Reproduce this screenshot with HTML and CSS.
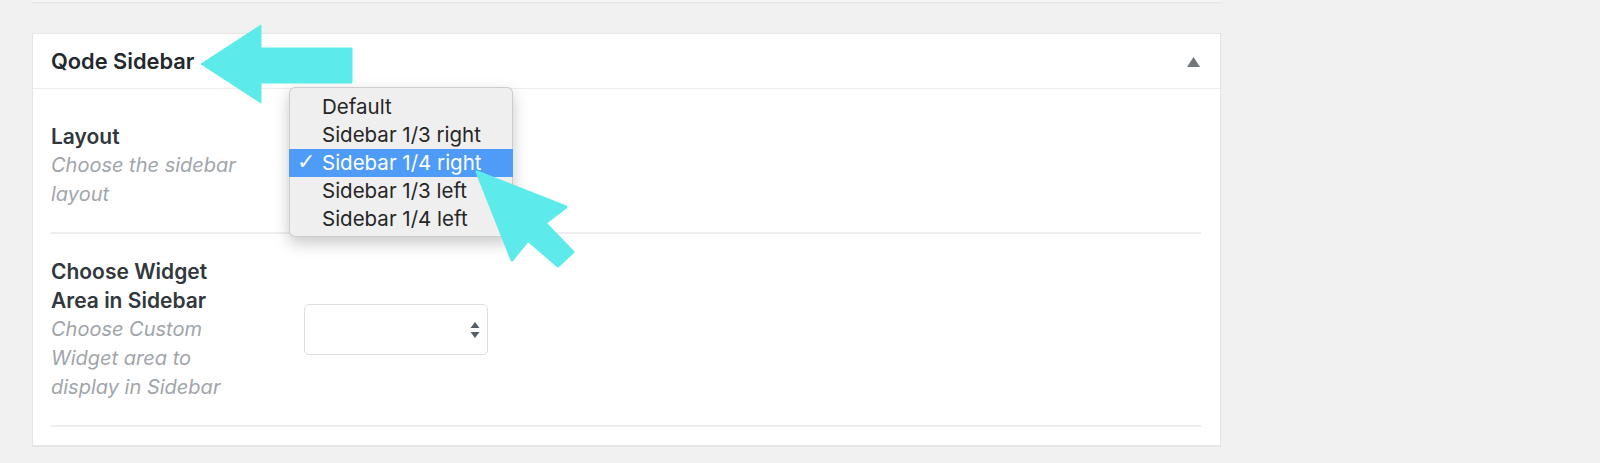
FILE: index.html
```html
<!DOCTYPE html>
<html lang="en">
<head>
<meta charset="utf-8">
<title>Qode Sidebar</title>
<link rel="stylesheet" href="styles.css">
</head>
<body>
<div class="wrap">
  <div class="prev-box"></div>
  <div class="postbox">
    <div class="postbox-header">
      <h2 class="postbox-title">Qode Sidebar</h2>
      <svg class="toggle" width="13" height="10" viewBox="0 0 13 10"><polygon points="6.5,0 13,10 0,10" fill="#72777c"/></svg>
    </div>
    <div class="postbox-inside">
      <div class="field-row">
        <div class="field-label">
          <div class="label-title">Layout</div>
          <div class="label-desc">Choose the sidebar layout</div>
        </div>
        <div class="field-control">
          <div class="select">
            <svg class="select-arrows" width="10" height="16" viewBox="0 0 10 16"><polygon points="5,0 9.5,6 0.5,6" fill="#555d66"/><polygon points="0.5,10 9.5,10 5,16" fill="#555d66"/></svg>
          </div>
          <ul class="popup-menu">
            <li class="menu-item">Default</li>
            <li class="menu-item">Sidebar 1/3 right</li>
            <li class="menu-item is-selected"><span class="check">✓</span>Sidebar 1/4 right</li>
            <li class="menu-item">Sidebar 1/3 left</li>
            <li class="menu-item">Sidebar 1/4 left</li>
          </ul>
        </div>
      </div>
      <div class="field-row">
        <div class="field-label">
          <div class="label-title">Choose Widget Area in Sidebar</div>
          <div class="label-desc">Choose Custom Widget area to display in Sidebar</div>
        </div>
        <div class="field-control">
          <div class="select">
            <svg class="select-arrows" width="10" height="16" viewBox="0 0 10 16"><polygon points="5,0 9.5,6 0.5,6" fill="#555d66"/><polygon points="0.5,10 9.5,10 5,16" fill="#555d66"/></svg>
          </div>
        </div>
      </div>
    </div>
  </div>
</div>
<svg class="annotations" width="1600" height="463" viewBox="0 0 1600 463">
  <polygon points="201,64 261,25 261,48 352,48 352,83 261,83 261,103" fill="#5deaea" stroke="#5deaea" stroke-width="1" stroke-linejoin="round"/>
  <polygon points="477,172 566,207 545,223 573,252 558,266 528,240 512,260" fill="#5deaea" stroke="#5deaea" stroke-width="3" stroke-linejoin="round"/>
</svg>
</body>
</html>
```
FILE: styles.css
```css
html, body {
  margin: 0;
  padding: 0;
}
body {
  background: #f1f1f1;
  font-family: Inter, "Liberation Sans", sans-serif;
  color: #23282d;
  width: 1600px;
  height: 463px;
  overflow: hidden;
  position: relative;
}
.wrap {
  padding-left: 32px;
  width: 1189px;
}
.prev-box {
  height: 2px;
  background: #f5f5f5;
  box-shadow: 0 1px 2px rgba(0, 0, 0, 0.07);
}
.postbox {
  margin-top: 31px;
  background: #fff;
  border: 1px solid #e5e5e5;
  box-shadow: 0 1px 1px rgba(0, 0, 0, 0.04);
}
.postbox-header {
  height: 54px;
  border-bottom: 1px solid #eeeeee;
  display: flex;
  align-items: center;
  justify-content: space-between;
  padding: 0 20px 0 18px;
}
.postbox-title {
  margin: 0;
  font-size: 21.8px;
  font-weight: 600;
  line-height: 54px;
  color: #23282d;
}
.toggle {
  display: block;
  margin-top: 2px;
}
.postbox-inside {
  padding: 10px 19px 18px 18px;
}
.field-row {
  display: flex;
  align-items: center;
  padding: 23px 0;
  border-bottom: 2px solid #eeeeee;
}
.field-label {
  flex: 0 0 192px;
  margin-right: 61px;
}
.label-title {
  font-size: 21px;
  font-weight: 600;
  line-height: 29px;
  color: #32373c;
}
.label-desc {
  font-size: 20px;
  font-style: italic;
  line-height: 29px;
  color: #a0a5aa;
}
.field-control {
  position: relative;
}
.select {
  height: 49px;
  border: 1px solid #dddddd;
  border-radius: 5px;
  background: #fff;
  display: flex;
  align-items: center;
  justify-content: flex-end;
  padding-right: 7px;
  box-sizing: content-box;
  width: 175px;
}
.select-arrows {
  display: block;
}
.popup-menu {
  position: absolute;
  left: -15px;
  top: -53px;
  width: 224px;
  margin: 0;
  padding: 5px 0;
  list-style: none;
  background: #efefef;
  border: 1px solid rgba(0, 0, 0, 0.14);
  border-radius: 6px;
  box-shadow: 0 6px 16px rgba(0, 0, 0, 0.22);
  box-sizing: border-box;
  height: 150px;
}
.menu-item {
  position: relative;
  height: 28px;
  line-height: 28px;
  padding-left: 32px;
  font-size: 20.5px;
  color: #262626;
}
.menu-item.is-selected {
  background: #4e9bf8;
  color: #fff;
  margin: 0 -1px;
  padding-left: 33px;
}
.check {
  position: absolute;
  left: 8px;
  top: -1px;
  font-size: 22px;
  font-weight: bold;
  font-family: "DejaVu Sans", sans-serif;
}
.annotations {
  position: absolute;
  left: 0;
  top: 0;
  pointer-events: none;
}
```
